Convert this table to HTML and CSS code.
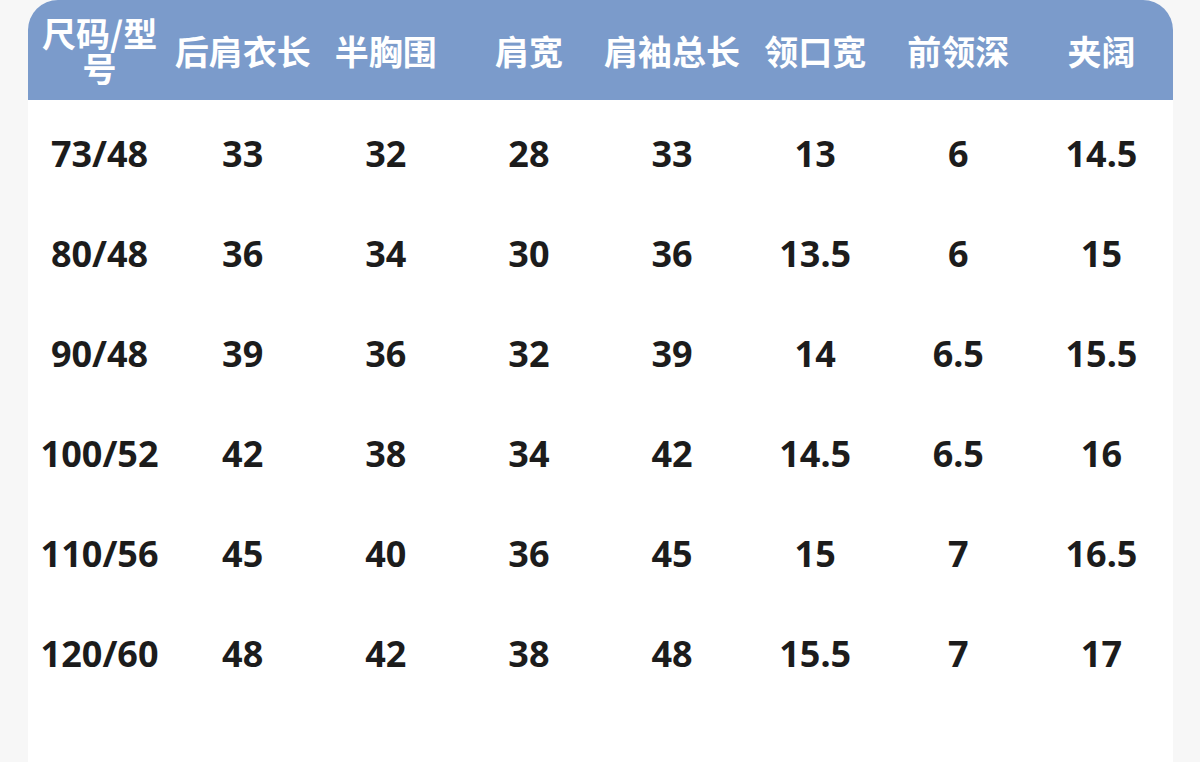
FILE: index.html
```html
<!DOCTYPE html>
<html lang="zh-CN">
<head>
<meta charset="utf-8">
<title>尺码表</title>
<link rel="stylesheet" href="styles.css">
</head>
<body>
<div class="card">
  <div class="row head">
    <div class="cell">尺码/型<br>号</div>
    <div class="cell">后肩衣长</div>
    <div class="cell">半胸围</div>
    <div class="cell">肩宽</div>
    <div class="cell">肩袖总长</div>
    <div class="cell">领口宽</div>
    <div class="cell">前领深</div>
    <div class="cell">夹阔</div>
  </div>
  <div class="body">
    <div class="row"><div class="cell">73/48</div><div class="cell">33</div><div class="cell">32</div><div class="cell">28</div><div class="cell">33</div><div class="cell">13</div><div class="cell">6</div><div class="cell">14.5</div></div>
    <div class="row"><div class="cell">80/48</div><div class="cell">36</div><div class="cell">34</div><div class="cell">30</div><div class="cell">36</div><div class="cell">13.5</div><div class="cell">6</div><div class="cell">15</div></div>
    <div class="row"><div class="cell">90/48</div><div class="cell">39</div><div class="cell">36</div><div class="cell">32</div><div class="cell">39</div><div class="cell">14</div><div class="cell">6.5</div><div class="cell">15.5</div></div>
    <div class="row"><div class="cell">100/52</div><div class="cell">42</div><div class="cell">38</div><div class="cell">34</div><div class="cell">42</div><div class="cell">14.5</div><div class="cell">6.5</div><div class="cell">16</div></div>
    <div class="row"><div class="cell">110/56</div><div class="cell">45</div><div class="cell">40</div><div class="cell">36</div><div class="cell">45</div><div class="cell">15</div><div class="cell">7</div><div class="cell">16.5</div></div>
    <div class="row"><div class="cell">120/60</div><div class="cell">48</div><div class="cell">42</div><div class="cell">38</div><div class="cell">48</div><div class="cell">15.5</div><div class="cell">7</div><div class="cell">17</div></div>
  </div>
</div>
</body>
</html>
```
FILE: styles.css
```css
html, body {
  margin: 0;
  padding: 0;
  background: #f7f7f7;
  height: 100%;
  overflow: hidden;
}
.card {
  margin-left: 28px;
  width: 1145px;
  min-height: 800px;
  background: #ffffff;
  border-radius: 30px 30px 0 0;
  overflow: hidden;
}
.row {
  display: grid;
  grid-template-columns: repeat(8, 1fr);
  height: 100px;
}
.cell {
  display: flex;
  align-items: center;
  justify-content: center;
  text-align: center;
}
.head {
  background: #7b9bcb;
  color: #ffffff;
  font-family: "Noto Sans CJK SC", "Noto Sans", sans-serif;
  font-weight: 700;
  font-size: 34px;
  line-height: 35px;
}
.body {
  padding-top: 4px;
  font-family: "Noto Sans", "Open Sans", sans-serif;
  font-weight: 700;
  font-size: 36px;
  color: #1c1c1c;
}
.body .cell {
  line-height: 100px;
}
```
